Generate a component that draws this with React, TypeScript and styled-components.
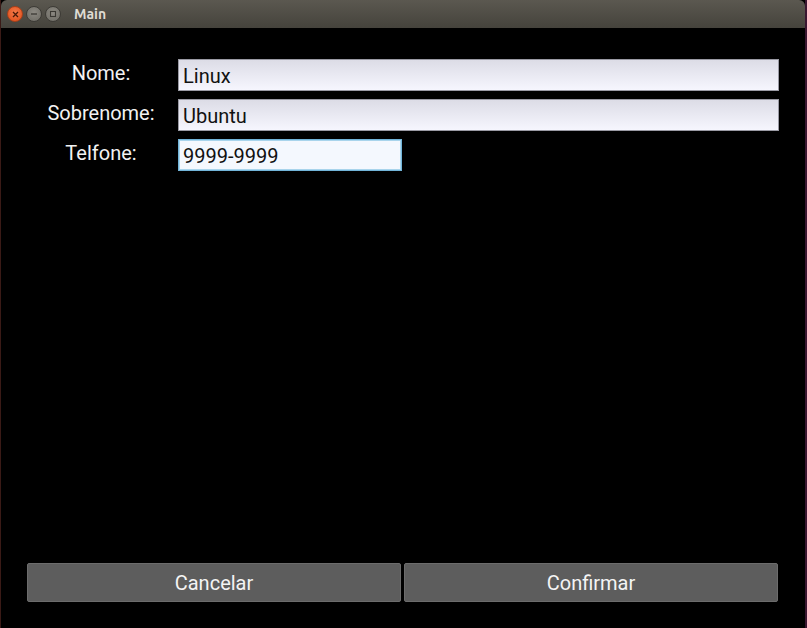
import React from "react";
import styled, { createGlobalStyle } from "styled-components";

const Global = createGlobalStyle`
  html, body { margin: 0; padding: 0; background: #000; }
  body { font-family: Roboto, "Liberation Sans", sans-serif; }
  #root { width: 807px; height: 628px; }
`;

const Window = styled.div`
  width: 807px;
  height: 628px;
  display: flex;
  flex-direction: column;
  box-sizing: border-box;
  background: #000;
  border-left: 1px solid #3a1a16;
  border-right: 2px solid #3a1630;
  overflow: hidden;
`;

const TitleBar = styled.div`
  height: 28px;
  flex: none;
  display: flex;
  align-items: center;
  padding-left: 6px;
  gap: 3px;
  background: linear-gradient(#5b5850, #45433c);
  border-top-left-radius: 6px;
  border-top-right-radius: 6px;
`;

const WinButton = styled.div<{ $kind: "close" | "min" | "max" }>`
  width: 16px;
  height: 16px;
  border-radius: 50%;
  display: flex;
  align-items: center;
  justify-content: center;
  box-sizing: border-box;
  background: ${(p) =>
    p.$kind === "close"
      ? "radial-gradient(circle at 50% 40%, #f57a4a, #df4b16)"
      : "radial-gradient(circle at 50% 40%, #8d8a83, #6b6962)"};
  border: 1px solid ${(p) => (p.$kind === "close" ? "#a8401a" : "#3d3b36")};
`;

const Title = styled.span`
  margin-left: 10px;
  color: #dfdbd2;
  font-family: Ubuntu, "DejaVu Sans", "Noto Sans", sans-serif;
  font-weight: bold;
  font-size: 14px;
`;

const Body = styled.div`
  flex: 1;
  display: flex;
  flex-direction: column;
  padding: 31px 26px 26px 26px;
  box-sizing: border-box;
`;

const Form = styled.div`
  display: grid;
  grid-template-columns: 148px 1fr;
  column-gap: 3px;
  row-gap: 8px;
`;

const Label = styled.label`
  color: #f2f2f2;
  font-size: 20px;
  text-align: center;
  line-height: 28px;
`;

const Field = styled.div<{ $short?: boolean; $focused?: boolean }>`
  height: 32px;
  box-sizing: border-box;
  width: ${(p) => (p.$short ? "224px" : "auto")};
  border: 1px solid ${(p) => (p.$focused ? "#72b4d8" : "#9a9aa4")};
  ${(p) => (p.$focused ? "box-shadow: inset 0 0 0 1px #a8d4ec;" : "")}
  background: ${(p) =>
    p.$focused ? "#f4f8fe" : "linear-gradient(#dcdce6, #f6f6fe)"};
  color: #111;
  font-size: 20px;
  display: flex;
  align-items: center;
  padding-left: 4px;
  padding-top: 1px;
`;

const Spacer = styled.div`
  flex: 1;
`;

const Buttons = styled.div`
  display: grid;
  grid-template-columns: 1fr 1fr;
  gap: 3px;
  margin-right: 1px;
`;

const Button = styled.button`
  height: 39px;
  background: #5d5d5d;
  border: 1px solid #6c6c6c;
  border-radius: 2px;
  color: #f4f4f4;
  font-family: Roboto, "Liberation Sans", sans-serif;
  font-size: 20px;
  padding: 0;
`;

export default function App() {
  return (
    <>
      <Global />
      <Window>
        <TitleBar>
          <WinButton $kind="close">
            <svg width="7" height="7" viewBox="0 0 7 7">
              <path d="M1 1 L6 6 M6 1 L1 6" stroke="#4a1a08" strokeWidth="1.3" />
            </svg>
          </WinButton>
          <WinButton $kind="min">
            <svg width="8" height="8" viewBox="0 0 8 8">
              <path d="M1 4 H7" stroke="#3a3833" strokeWidth="1.3" />
            </svg>
          </WinButton>
          <WinButton $kind="max">
            <svg width="8" height="8" viewBox="0 0 8 8">
              <rect x="1.5" y="1.5" width="5" height="5" fill="none" stroke="#3a3833" strokeWidth="1.1" />
            </svg>
          </WinButton>
          <Title>Main</Title>
        </TitleBar>
        <Body>
          <Form>
            <Label>Nome:</Label>
            <Field>Linux</Field>
            <Label>Sobrenome:</Label>
            <Field>Ubuntu</Field>
            <Label>Telfone:</Label>
            <Field $short $focused>9999-9999</Field>
          </Form>
          <Spacer />
          <Buttons>
            <Button>Cancelar</Button>
            <Button>Confirmar</Button>
          </Buttons>
        </Body>
      </Window>
    </>
  );
}
